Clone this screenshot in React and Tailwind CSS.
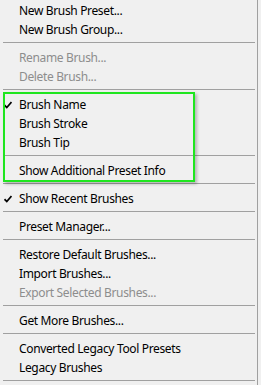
const rows = [
  { label: 'New Brush Preset...' },
  { label: 'New Brush Group...' },
  'sep',
  { label: 'Rename Brush...', disabled: true },
  { label: 'Delete Brush...', disabled: true },
  'sep',
  { label: 'Brush Name', checked: true },
  { label: 'Brush Stroke' },
  { label: 'Brush Tip' },
  'sep',
  { label: 'Show Additional Preset Info' },
  'sep',
  { label: 'Show Recent Brushes', checked: true },
  'sep',
  { label: 'Preset Manager...' },
  'sep',
  { label: 'Restore Default Brushes...' },
  { label: 'Import Brushes...' },
  { label: 'Export Selected Brushes...', disabled: true },
  'sep',
  { label: 'Get More Brushes...' },
  'sep',
  { label: 'Converted Legacy Tool Presets' },
  { label: 'Legacy Brushes' },
  'sep',
];

function Check() {
  return (
    <svg width="8" height="8" viewBox="0 0 8 8" className="absolute left-[4px] top-[6px]">
      <path d="M0.5 4.2 L2.8 6.6 L7.5 1" fill="none" stroke="#000" strokeWidth="1.7" />
    </svg>
  );
}

export default function App() {
  return (
    <div className="relative w-[261px] h-[385px] bg-[#f0f0f0] overflow-hidden font-['Noto_Sans',sans-serif] text-[12px] tracking-[-0.35px]">
      <div className="w-[258px] h-full border-r border-[#a0a0a0] pt-[1px]">
        {rows.map((r, i) =>
          r === 'sep' ? (
            <div key={i} className="h-[9px] pt-[3px] pl-[3px] pr-[2px]">
              <div className="h-px bg-[#a0a0a0]" />
            </div>
          ) : (
            <div
              key={i}
              className={`relative h-[19px] pl-[19px] leading-[19px] whitespace-nowrap ${
                r.disabled ? 'text-[#8d8d8d]' : 'text-black'
              }`}
            >
              {r.checked && <Check />}
              {r.label}
            </div>
          )
        )}
      </div>
      <div className="absolute left-[3px] top-[92px] w-[192px] h-[90px] border-[2px] border-[#1fe61f] shadow-[2px_2px_3px_rgba(0,0,0,0.25)]" />
    </div>
  );
}
